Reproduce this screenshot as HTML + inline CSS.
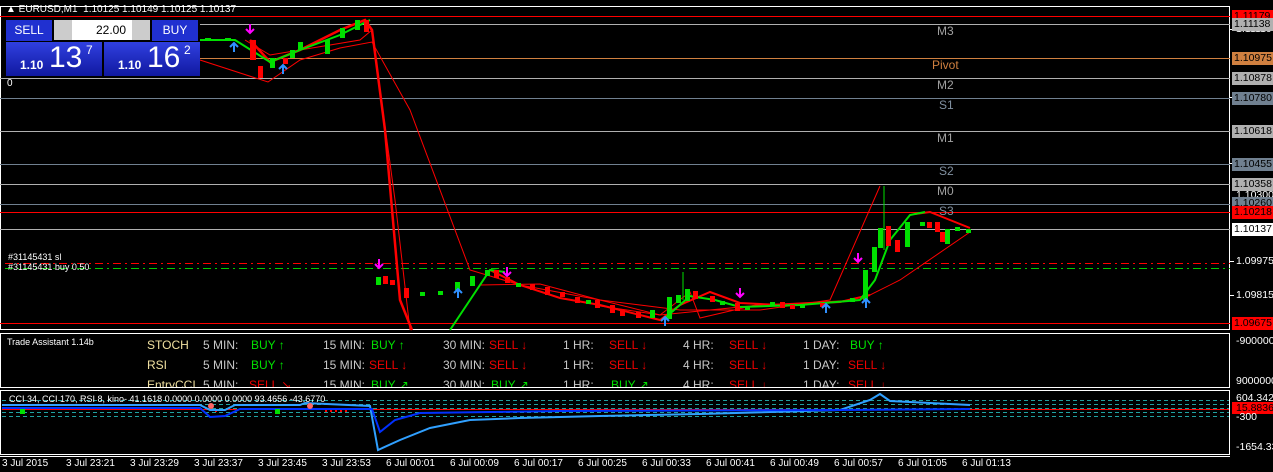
<!DOCTYPE html>
<html><head><meta charset="utf-8"><style>
body{margin:0;background:#000;width:1273px;height:472px;overflow:hidden;font-family:"Liberation Sans",sans-serif;position:relative}
.a{position:absolute;font-size:11px;white-space:nowrap}
.pl{position:absolute;left:1232px;width:41px;height:13px;font-size:10.5px;line-height:13px;color:#000;padding-left:2px;box-sizing:border-box}
.tk{position:absolute;left:1236px;font-size:10.5px;color:#fff}
.ta{position:absolute;font-size:12px;color:#c8c8c8}
.b{color:#00e000}.s{color:#f00000}
.lv{position:absolute;font-size:12px}
.tm{position:absolute;top:458px;font-size:10px;color:#fff}
</style></head><body>
<svg width="1273" height="472" style="position:absolute;left:0;top:0">
<rect x="0.5" y="6.5" width="1229" height="323" fill="none" stroke="#fff"/>
<rect x="0.5" y="333.5" width="1229" height="54" fill="none" stroke="#fff"/>
<rect x="0.5" y="390.5" width="1229" height="64" fill="none" stroke="#fff"/>
<line x1="0" y1="16.5" x2="1230" y2="16.5" stroke="#f00"/>
<line x1="200" y1="24.5" x2="1230" y2="24.5" stroke="#b0b0b0"/>
<line x1="200" y1="58.5" x2="1230" y2="58.5" stroke="#d08040"/>
<line x1="0" y1="78.5" x2="1230" y2="78.5" stroke="#b0b0b0"/>
<line x1="0" y1="98.5" x2="1230" y2="98.5" stroke="#708090"/>
<line x1="0" y1="131.5" x2="1230" y2="131.5" stroke="#b0b0b0"/>
<line x1="0" y1="164.5" x2="1230" y2="164.5" stroke="#708090"/>
<line x1="0" y1="184.5" x2="1230" y2="184.5" stroke="#b0b0b0"/>
<line x1="0" y1="204.5" x2="1230" y2="204.5" stroke="#708090"/>
<line x1="0" y1="212.5" x2="1230" y2="212.5" stroke="#f00"/>
<line x1="0" y1="229.5" x2="1230" y2="229.5" stroke="#b0b0b0"/>
<line x1="5" y1="263.5" x2="1230" y2="263.5" stroke="#f00" stroke-dasharray="8,4,2,4"/>
<line x1="5" y1="268.5" x2="1230" y2="268.5" stroke="#0c0" stroke-dasharray="8,4,2,4"/>
<line x1="0" y1="323.5" x2="1230" y2="323.5" stroke="#f00"/>
<polyline fill="none" stroke="#f00" stroke-width="1" points="200,60 268,82 300,60 340,48 372,42 410,110 470,270 520,285 600,300 680,310 760,310 830,300 880,186"/>
<polyline fill="none" stroke="#f00" stroke-width="1" points="245,40 270,55 300,50 360,40 372,30"/>
<polyline fill="none" stroke="#f00" stroke-width="1" points="372,30 395,200 410,330"/>
<polyline fill="none" stroke="#f00" stroke-width="1" points="480,285 540,284 600,300 660,315 700,311 760,305 860,300 900,280 970,232"/>
<polyline fill="none" stroke="#f00" stroke-width="1" points="600,306 660,315 690,292 700,318 760,304"/>
<polyline fill="none" stroke="#f00" stroke-width="2.5" points="250,40 270,62 300,50 340,30 365,20 372,30 385,130 400,300 412,330"/>
<polyline fill="none" stroke="#f00" stroke-width="2" points="490,270 520,285 560,298 600,305 640,315 660,320 680,305 710,292 740,303 780,305 840,302 870,295"/>
<polyline fill="none" stroke="#f00" stroke-width="2" points="915,214 930,212 950,220 970,228"/>
<polyline fill="none" stroke="#00e000" stroke-width="2" points="200,40 235,40 270,62 300,50 340,35 370,20"/>
<polyline fill="none" stroke="#00e000" stroke-width="2" points="450,330 470,300 490,270 505,272"/>
<polyline fill="none" stroke="#00e000" stroke-width="2" points="665,318 690,296 715,300 740,307 800,305 860,300 875,280 890,240 910,215 925,212"/>
<g fill="#00e000">
<rect x="205" y="38" width="6" height="3"/><rect x="225" y="38" width="6" height="3"/><rect x="270" y="58" width="5" height="10"/><rect x="290" y="50" width="5" height="8"/><rect x="298" y="42" width="5" height="8"/><rect x="325" y="40" width="5" height="14"/><rect x="340" y="28" width="5" height="10"/><rect x="355" y="20" width="5" height="10"/>
<rect x="376" y="277" width="5" height="8"/><rect x="420" y="292" width="5" height="4"/><rect x="438" y="291" width="5" height="4"/><rect x="455" y="282" width="5" height="8"/><rect x="470" y="276" width="5" height="10"/><rect x="485" y="270" width="5" height="6"/>
<rect x="516" y="283" width="5" height="4"/><rect x="586" y="300" width="5" height="4"/><rect x="650" y="310" width="5" height="8"/><rect x="667" y="297" width="5" height="22"/><rect x="676" y="295" width="5" height="8"/><rect x="685" y="289" width="5" height="12"/><rect x="720" y="301" width="5" height="4"/><rect x="745" y="306" width="5" height="4"/><rect x="770" y="302" width="5" height="4"/><rect x="800" y="305" width="5" height="3"/><rect x="850" y="298" width="5" height="4"/><rect x="863" y="270" width="5" height="30"/><rect x="872" y="247" width="5" height="25"/><rect x="878" y="228" width="5" height="20"/><rect x="905" y="222" width="5" height="25"/><rect x="920" y="222" width="5" height="4"/><rect x="945" y="229" width="5" height="15"/><rect x="955" y="227" width="5" height="4"/><rect x="966" y="229" width="5" height="4"/>
</g>
<g fill="#f00">
<rect x="250" y="40" width="6" height="20"/><rect x="258" y="66" width="5" height="12"/><rect x="283" y="58" width="5" height="6"/><rect x="364" y="20" width="5" height="12"/>
<rect x="383" y="276" width="5" height="8"/><rect x="390" y="280" width="5" height="5"/><rect x="404" y="288" width="5" height="10"/><rect x="494" y="270" width="5" height="8"/><rect x="505" y="277" width="5" height="6"/><rect x="530" y="284" width="5" height="6"/><rect x="545" y="287" width="5" height="8"/><rect x="560" y="292" width="5" height="5"/><rect x="575" y="297" width="5" height="6"/><rect x="595" y="300" width="5" height="8"/><rect x="610" y="305" width="5" height="8"/><rect x="620" y="310" width="5" height="6"/><rect x="636" y="312" width="5" height="6"/><rect x="693" y="291" width="5" height="8"/><rect x="710" y="296" width="5" height="6"/><rect x="735" y="303" width="5" height="8"/><rect x="780" y="302" width="5" height="6"/><rect x="790" y="305" width="5" height="4"/><rect x="820" y="303" width="5" height="4"/><rect x="886" y="226" width="5" height="20"/><rect x="895" y="240" width="5" height="12"/><rect x="927" y="222" width="5" height="6"/><rect x="935" y="222" width="5" height="10"/><rect x="940" y="232" width="5" height="10"/>
</g>
<line x1="884" y1="186" x2="884" y2="250" stroke="#00e000"/>
<line x1="683" y1="272" x2="683" y2="300" stroke="#00e000"/>
<g stroke="#3090ff" stroke-width="2" fill="none">
<path d="M234,52 v-9 M230,47 l4,-4 4,4"/><path d="M283,74 v-9 M279,69 l4,-4 4,4"/><path d="M458,298 v-9 M454,293 l4,-4 4,4"/><path d="M665,326 v-9 M661,321 l4,-4 4,4"/><path d="M826,313 v-9 M822,308 l4,-4 4,4"/><path d="M866,308 v-9 M862,303 l4,-4 4,4"/>
</g>
<g stroke="#ff00ff" stroke-width="2" fill="none">
<path d="M250,33 v-9 M246,29 l4,4 4,-4"/><path d="M379,268 v-9 M375,264 l4,4 4,-4"/><path d="M507,276 v-9 M503,272 l4,4 4,-4"/><path d="M740,297 v-9 M736,293 l4,4 4,-4"/><path d="M858,262 v-9 M854,258 l4,4 4,-4"/>
</g>
<g stroke="#20a0a0" stroke-dasharray="4,3"><line x1="2" y1="400.5" x2="1229" y2="400.5"/><line x1="2" y1="404.5" x2="1229" y2="404.5"/><line x1="2" y1="408.5" x2="1229" y2="408.5"/><line x1="2" y1="412.5" x2="1229" y2="412.5"/><line x1="2" y1="416.5" x2="1229" y2="416.5"/></g>
<line x1="2" y1="409.5" x2="1229" y2="409.5" stroke="#f00"/>
<g fill="#f00"><rect x="215" y="409" width="2" height="3"/><rect x="325" y="409" width="2" height="3"/><rect x="330" y="409" width="2" height="3"/><rect x="335" y="409" width="2" height="3"/><rect x="340" y="409" width="2" height="3"/><rect x="345" y="409" width="2" height="3"/></g>
<polyline fill="none" stroke="#30a0ff" stroke-width="2" points="2,405 200,405 210,410 225,410 235,405 300,405 305,403 370,406 378,450 400,440 430,428 470,420 520,418 600,416 700,414 840,410 870,400 880,394 890,401 970,405"/>
<polyline fill="none" stroke="#0030ff" stroke-width="2" points="2,408 200,408 210,417 225,416 240,409 300,409 372,409 380,432 395,420 420,413 560,411 840,410 970,409"/>
<g fill="#00e000"><rect x="20" y="409" width="5" height="5"/><rect x="275" y="409" width="5" height="5"/></g>
<g fill="#f66"><circle cx="211" cy="406" r="3"/><circle cx="310" cy="406" r="3"/></g>
<rect x="1232" y="402" width="41" height="12" fill="#f00"/>
<g stroke="#fff"><line x1="1230" y1="29.5" x2="1234" y2="29.5"/><line x1="1230" y1="97.5" x2="1234" y2="97.5"/><line x1="1230" y1="163.5" x2="1234" y2="163.5"/><line x1="1230" y1="261.5" x2="1234" y2="261.5"/><line x1="1230" y1="295.5" x2="1234" y2="295.5"/></g>
<line x1="0" y1="456.5" x2="1230" y2="456.5" stroke="#fff"/>
</svg>
<div class="a" style="left:6px;top:4px;color:#fff;font-size:10px">▲ EURUSD,M1 &nbsp;1.10125 1.10149 1.10125 1.10137</div>
<div style="position:absolute;left:6px;top:20px;width:46px;height:21px;background:#2030d0;color:#fff;font-size:12px;text-align:center;line-height:21px">SELL</div>
<div style="position:absolute;left:54px;top:20px;width:96px;height:20px;background:#fff;font-size:12px;line-height:20px;text-align:right"><span style="position:absolute;left:0;top:0;width:18px;height:20px;background:#ccc"></span><span style="position:absolute;right:0;top:0;width:18px;height:20px;background:#ccc"></span><span style="margin-right:24px">22.00</span></div>
<div style="position:absolute;left:152px;top:20px;width:46px;height:21px;background:#2030d0;color:#fff;font-size:12px;text-align:center;line-height:21px">BUY</div>
<div style="position:absolute;left:6px;top:42px;width:96px;height:34px;background:linear-gradient(#3040e0,#1018a0);color:#fff"><span style="position:absolute;left:14px;top:16px;font-size:12px;font-weight:bold">1.10</span><span style="position:absolute;left:43px;top:-1px;font-size:30px">13</span><span style="position:absolute;left:80px;top:1px;font-size:12px">7</span></div>
<div style="position:absolute;left:104px;top:42px;width:96px;height:34px;background:linear-gradient(#3040e0,#1018a0);color:#fff"><span style="position:absolute;left:14px;top:16px;font-size:12px;font-weight:bold">1.10</span><span style="position:absolute;left:43px;top:-1px;font-size:30px">16</span><span style="position:absolute;left:80px;top:1px;font-size:12px">2</span></div>
<div class="a" style="left:7px;top:78px;color:#fff;font-size:10px">0</div>
<div class="a" style="left:8px;top:252px;color:#fff;font-size:9px">#31145431 sl<br>#31145431 buy 0.50</div>
<div class="lv" style="left:937px;top:24px;color:#a0a0a0">M3</div>
<div class="lv" style="left:932px;top:58px;color:#d08040">Pivot</div>
<div class="lv" style="left:937px;top:78px;color:#a0a0a0">M2</div>
<div class="lv" style="left:939px;top:98px;color:#8090a0">S1</div>
<div class="lv" style="left:937px;top:131px;color:#a0a0a0">M1</div>
<div class="lv" style="left:939px;top:164px;color:#8090a0">S2</div>
<div class="lv" style="left:937px;top:184px;color:#a0a0a0">M0</div>
<div class="lv" style="left:939px;top:204px;color:#8090a0">S3</div>
<div class="tk" style="top:23px">1.11110</div>
<div class="tk" style="top:56px">1.10936</div>
<div class="tk" style="top:189px">1.10300</div>
<div class="tk" style="top:255px">1.09975</div>
<div class="tk" style="top:289px">1.09815</div>
<div class="pl" style="top:10px;background:#f00">1.11179</div>
<div class="pl" style="top:18px;background:#b0b0b0">1.11138</div>
<div class="pl" style="top:52px;background:#d08040">1.10975</div>
<div class="pl" style="top:72px;background:#b0b0b0">1.10878</div>
<div class="pl" style="top:92px;background:#708090">1.10780</div>
<div class="pl" style="top:125px;background:#b0b0b0">1.10618</div>
<div class="pl" style="top:158px;background:#708090">1.10455</div>
<div class="pl" style="top:178px;background:#b0b0b0">1.10358</div>
<div class="pl" style="top:197px;background:#708090">1.10260</div>
<div class="pl" style="top:206px;background:#f00">1.10218</div>
<div class="pl" style="top:223px;background:#fff">1.10137</div>
<div class="pl" style="top:317px;background:#f00">1.09675</div>
<div class="tk" style="top:335px">-9000000</div>
<div class="tk" style="top:375px">9000000</div>
<div class="tk" style="top:392px">604.3427</div>
<div class="tk" style="top:402px;color:#000">15.8836</div>
<div class="tk" style="top:411px">-300</div>
<div class="tk" style="top:441px">-1654.335</div>
<div class="a" style="left:7px;top:337px;color:#fff;font-size:9px">Trade Assistant 1.14b</div>
<div style="position:absolute;left:0;top:334px;width:1229px;height:53px;overflow:hidden">
<div class="ta" style="left:147px;top:4px;color:#f0e0a0">STOCH</div><div class="ta" style="left:203px;top:4px">5 MIN:</div><div class="ta b" style="left:251px;top:4px">BUY ↑</div><div class="ta" style="left:323px;top:4px">15 MIN:</div><div class="ta b" style="left:371px;top:4px">BUY ↑</div><div class="ta" style="left:443px;top:4px">30 MIN:</div><div class="ta s" style="left:489px;top:4px">SELL ↓</div><div class="ta" style="left:563px;top:4px">1 HR:</div><div class="ta s" style="left:609px;top:4px">SELL ↓</div><div class="ta" style="left:683px;top:4px">4 HR:</div><div class="ta s" style="left:729px;top:4px">SELL ↓</div><div class="ta" style="left:803px;top:4px">1 DAY:</div><div class="ta b" style="left:850px;top:4px">BUY ↑</div>
<div class="ta" style="left:147px;top:24px;color:#f0e0a0">RSI</div><div class="ta" style="left:203px;top:24px">5 MIN:</div><div class="ta b" style="left:251px;top:24px">BUY ↑</div><div class="ta" style="left:323px;top:24px">15 MIN:</div><div class="ta s" style="left:369px;top:24px">SELL ↓</div><div class="ta" style="left:443px;top:24px">30 MIN:</div><div class="ta s" style="left:489px;top:24px">SELL ↓</div><div class="ta" style="left:563px;top:24px">1 HR:</div><div class="ta s" style="left:609px;top:24px">SELL ↓</div><div class="ta" style="left:683px;top:24px">4 HR:</div><div class="ta s" style="left:729px;top:24px">SELL ↓</div><div class="ta" style="left:803px;top:24px">1 DAY:</div><div class="ta s" style="left:848px;top:24px">SELL ↓</div>
<div class="ta" style="left:147px;top:44px;color:#f0e0a0">EntryCCI</div><div class="ta" style="left:203px;top:44px">5 MIN:</div><div class="ta s" style="left:249px;top:44px">SELL ↘</div><div class="ta" style="left:323px;top:44px">15 MIN:</div><div class="ta b" style="left:371px;top:44px">BUY ↗</div><div class="ta" style="left:443px;top:44px">30 MIN:</div><div class="ta b" style="left:491px;top:44px">BUY ↗</div><div class="ta" style="left:563px;top:44px">1 HR:</div><div class="ta b" style="left:611px;top:44px">BUY ↗</div><div class="ta" style="left:683px;top:44px">4 HR:</div><div class="ta s" style="left:729px;top:44px">SELL ↓</div><div class="ta" style="left:803px;top:44px">1 DAY:</div><div class="ta s" style="left:848px;top:44px">SELL ↓</div>
</div>
<div class="a" style="left:9px;top:394px;color:#fff;font-size:9px">CCI 34, CCI 170, RSI 8, kino- 41.1618 0.0000 0.0000 0.0000 93.4656 -43.6770</div>
<div class="tm" style="left:2px">3 Jul 2015</div><div class="tm" style="left:66px">3 Jul 23:21</div><div class="tm" style="left:130px">3 Jul 23:29</div><div class="tm" style="left:194px">3 Jul 23:37</div><div class="tm" style="left:258px">3 Jul 23:45</div><div class="tm" style="left:322px">3 Jul 23:53</div><div class="tm" style="left:386px">6 Jul 00:01</div><div class="tm" style="left:450px">6 Jul 00:09</div><div class="tm" style="left:514px">6 Jul 00:17</div><div class="tm" style="left:578px">6 Jul 00:25</div><div class="tm" style="left:642px">6 Jul 00:33</div><div class="tm" style="left:706px">6 Jul 00:41</div><div class="tm" style="left:770px">6 Jul 00:49</div><div class="tm" style="left:834px">6 Jul 00:57</div><div class="tm" style="left:898px">6 Jul 01:05</div><div class="tm" style="left:962px">6 Jul 01:13</div>
</body></html>
